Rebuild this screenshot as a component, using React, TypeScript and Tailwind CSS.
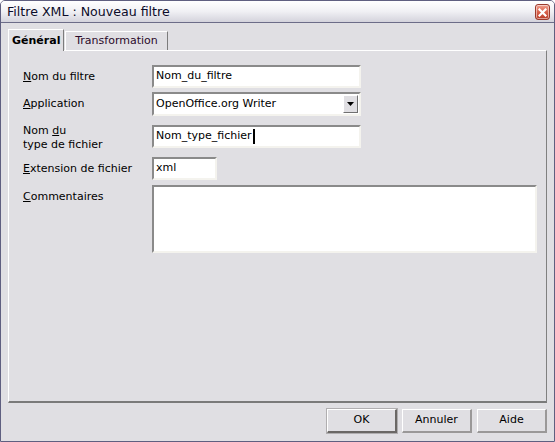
import React from "react";

const sunken =
  "bg-white border-2 border-t-[#8a8a8a] border-l-[#8a8a8a] border-b-[#f4f3ee] border-r-[#f4f3ee]";

function Label({ children }: { children: React.ReactNode }) {
  return <div className="w-[129px] shrink-0 leading-[14px]">{children}</div>;
}

function CloseButton() {
  return (
    <div className="w-[15px] h-[16px] mt-[1px] rounded-[3px] border border-[#9b3a2c] bg-gradient-to-b from-[#f0a090] via-[#d8604a] to-[#b83a26] flex items-center justify-center shadow-[inset_0_0_0_1px_rgba(255,255,255,0.5)]">
      <svg width="9" height="9" viewBox="0 0 9 9">
        <path d="M1.5 1.5 L7.5 7.5 M7.5 1.5 L1.5 7.5" stroke="white" strokeWidth="2.2" strokeLinecap="square" />
      </svg>
    </div>
  );
}

function DialogButton({ label, isDefault }: { label: string; isDefault?: boolean }) {
  return (
    <button
      className={
        "w-[70px] h-[24px] bg-[#e0dfe3] flex items-center justify-center text-[11px] text-black border-t border-l border-t-white border-l-white " +
        (isDefault
          ? "border-b-2 border-r-2 border-b-[#6b6866] border-r-[#6b6866] outline outline-1 outline-[#b0aeb0]"
          : "border-b-2 border-r-2 border-b-[#9a9898] border-r-[#9a9898]")
      }
    >
      {label}
    </button>
  );
}

export default function App() {
  return (
    <div
      className="w-[555px] h-[442px] bg-[#e0dfe3] flex flex-col border border-[#5f5f80] rounded-t-[5px] overflow-hidden text-black"
      style={{ fontFamily: '"DejaVu Sans", Verdana, sans-serif' }}
    >
      {/* Title bar */}
      <div className="h-[22px] shrink-0 flex items-center justify-between pl-[6px] pr-[4px] bg-gradient-to-b from-white via-[#f0f0f4] to-[#d4d3dc] border-b border-[#6c6c88]">
        <span className="text-[12.6px] text-[#0c0c2a] mt-[1px]">Filtre XML : Nouveau filtre</span>
        <CloseButton />
      </div>

      <div className="flex-1 flex flex-col px-[7px] pt-[6px] pb-[8px]">
        {/* Tabs */}
        <div className="h-[21px] flex items-end shrink-0">
          <div className="relative z-10 w-[56px] h-[22px] -mb-[1px] bg-[#e0dfe3] border-t border-l border-white border-r border-r-[#7c7c7c] flex items-center pl-[3px] pt-[2px] text-[11px] font-bold">
            Général
          </div>
          <div className="ml-[1px] w-[103px] h-[19px] border-t border-l border-white border-r border-r-[#7c7c7c] flex items-center justify-center pt-[1px] text-[11px] text-[#2a0a2a]">
            Transformation
          </div>
        </div>

        {/* Panel */}
        <div className="flex-1 border-t border-l border-white border-r border-r-[#808080] border-b-2 border-b-[#7a7a7a] pl-[14px] pt-[14px] text-[11px] flex flex-col">
          <div className="flex items-center h-[23px]">
            <Label>
              <span className="underline">N</span>om du filtre
            </Label>
            <div className={"w-[209px] h-full flex items-center pl-[2px] " + sunken}>Nom_du_filtre</div>
          </div>

          <div className="flex items-center h-[24px] mt-[4px]">
            <Label>
              <span className="underline">A</span>pplication
            </Label>
            <div className={"w-[209px] h-full flex items-center pl-[2px] " + sunken}>
              <span className="flex-1">OpenOffice.org Writer</span>
              <div className="w-[15px] h-[18px] mr-[1px] bg-[#e0dfe3] border-t border-l border-white border-b border-r border-b-[#707070] border-r-[#707070] flex items-center justify-center">
                <svg width="7" height="4" viewBox="0 0 7 4">
                  <path d="M0 0 H7 L3.5 4 Z" fill="black" />
                </svg>
              </div>
            </div>
          </div>

          <div className="flex items-start h-[23px] mt-[9px]">
            <Label>
              <div className="mt-[-1px]">
                Nom <span className="underline">d</span>u
              </div>
              <div>type de fichier</div>
            </Label>
            <div className={"w-[209px] h-full flex items-center pl-[2px] " + sunken}>
              Nom_type_fichier
              <span className="inline-block w-[2px] h-[15px] bg-black ml-[1px]" />
            </div>
          </div>

          <div className="flex items-center h-[23px] mt-[9px]">
            <Label>
              <span className="underline">E</span>xtension de fichier
            </Label>
            <div className={"w-[65px] h-full flex items-center pl-[2px] " + sunken}>xml</div>
          </div>

          <div className="flex items-start h-[68px] mt-[5px]">
            <Label>
              <div className="mt-[5px]">
                <span className="underline">C</span>ommentaires
              </div>
            </Label>
            <div className={"w-[385px] h-full " + sunken} />
          </div>
        </div>

        {/* Buttons */}
        <div className="flex justify-end gap-[5px] mt-[6px] shrink-0">
          <DialogButton label="OK" isDefault />
          <DialogButton label="Annuler" />
          <DialogButton label="Aide" />
        </div>
      </div>
    </div>
  );
}
